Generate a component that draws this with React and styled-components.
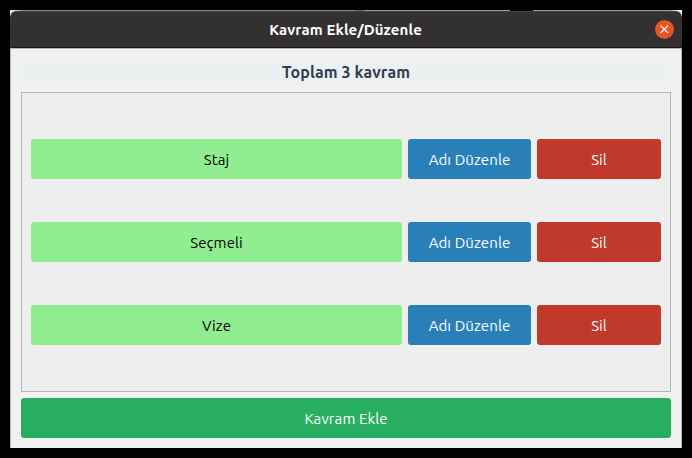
import React from "react";
import styled, { createGlobalStyle } from "styled-components";

const GlobalStyle = createGlobalStyle`
  * { box-sizing: border-box; }
  body { margin: 0; background: #000; }
`;

const Desktop = styled.div`
  width: 692px;
  height: 458px;
  padding: 10px;
  background: #000;
  font-family: Ubuntu, "Noto Sans", sans-serif;
`;

const Dialog = styled.section`
  display: flex;
  flex-direction: column;
  height: 438px;
  background: linear-gradient(90deg, #e4e2e0 0 6px, #858585 12px 345px, #4a4a4a 350px, #999 356px 500px, #000 500px 523px, #999 523px 660px, #eee 667px);
`;

const TitleBar = styled.header`
  display: grid;
  grid-template-columns: 28px 1fr 28px;
  align-items: center;
  height: 38px;
  padding: 0 4px;
  border-top: 1px solid transparent;
  border-bottom: 1px solid #1c171b;
  border-radius: 7px 7px 0 0;
  background: #333031;
  background-clip: padding-box;
  box-shadow: inset 0 1px #444142;
`;

const Title = styled.h1`
  grid-column: 2;
  margin: 0;
  padding: 1px 1px 0 0;
  text-align: center;
  color: #fff;
  font-size: 15px;
  line-height: 20px;
  font-weight: 700;
  letter-spacing: 0.1px;
`;

const CloseButton = styled.button`
  display: flex;
  justify-self: center;
  width: 19px;
  height: 19px;
  padding: 0;
  border: 0;
  border-radius: 50%;
  background: #e95420;
`;

const Body = styled.main`
  display: flex;
  flex: 1;
  flex-direction: column;
  gap: 6px;
  padding: 10px;
  border: 1px solid #b6b5b4;
  border-bottom: 0;
  background: #f1f1f1;
`;

const Summary = styled.h2`
  height: 27px;
  margin: 0;
  border-radius: 4px;
  background: #ecf0f1;
  color: #2c3e50;
  text-align: center;
  font-size: 16px;
  line-height: 27px;
  font-weight: 700;
  letter-spacing: 0.1px;
`;

const List = styled.div`
  display: flex;
  flex-direction: column;
  gap: 43px;
  height: 300px;
  padding: 46px 9px;
  border: 1px solid #b5b5b5;
  background: #eee;
`;

const Row = styled.div`
  display: grid;
  grid-template-columns: 371px 123px 124px;
  gap: 6px;
`;

const fills = { concept: "#90ee90", edit: "#2980b9", remove: "#c0392b", add: "#27ae60" };

const Button = styled.button`
  height: 40px;
  padding: 2px 0 0;
  border: 0;
  border-radius: 3px;
  background: ${({ $kind }) => fills[$kind]};
  color: ${({ $kind }) => ($kind === "concept" ? "#000" : "#fff")};
  font-family: inherit;
  font-size: 15px;
  line-height: 20px;
  letter-spacing: 0.1px;
`;

const concepts = ["Staj", "Seçmeli", "Vize"];

export default function App() {
  return (
    <Desktop>
      <GlobalStyle />
      <Dialog>
        <TitleBar>
          <Title>Kavram Ekle/Düzenle</Title>
          <CloseButton aria-label="Kapat">
            <svg width="19" height="19" viewBox="0 0 19 19" fill="none" stroke="#fff" strokeWidth="1.3">
              <path d="M5.5 5.5 13.1 13.1M13.1 5.5 5.5 13.1" />
            </svg>
          </CloseButton>
        </TitleBar>
        <Body>
          <Summary>Toplam 3 kavram</Summary>
          <List>
            {concepts.map((name) => (
              <Row key={name}>
                <Button $kind="concept">{name}</Button>
                <Button $kind="edit">Adı Düzenle</Button>
                <Button $kind="remove">Sil</Button>
              </Row>
            ))}
          </List>
          <Button $kind="add">Kavram Ekle</Button>
        </Body>
      </Dialog>
    </Desktop>
  );
}
